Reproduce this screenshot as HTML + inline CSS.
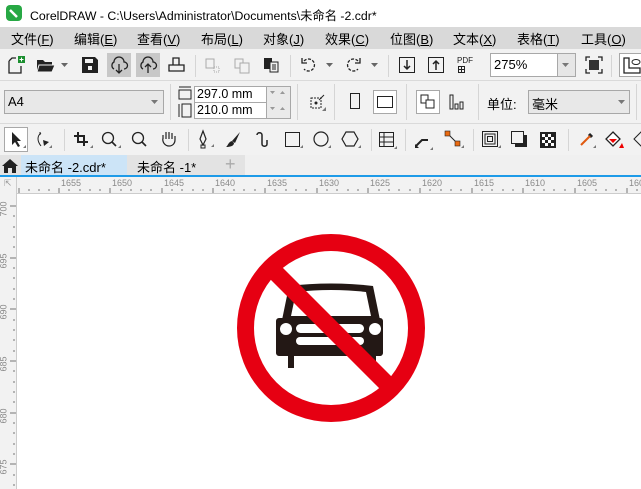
<!DOCTYPE html>
<html><head><meta charset="utf-8"><style>
*{margin:0;padding:0;box-sizing:border-box}
body{width:641px;height:489px;overflow:hidden;background:#fff;font-family:"Liberation Sans","Noto Sans CJK SC",sans-serif;position:relative;font-size:12px;color:#000}
.a{position:absolute}
.t{position:absolute;white-space:nowrap}
svg{position:absolute;overflow:visible}
.sep{position:absolute;width:1px;background:#d5d5d5}
.rl{position:absolute;font-size:9px;color:#8a8a8a;font-family:"Liberation Sans",sans-serif}
</style></head><body>
<!-- title -->
<div class="a" style="left:0;top:0;width:641px;height:27px;background:#fff"></div>
<div class="a" style="left:6px;top:5px;width:16px;height:16px;border-radius:4px;background:#27a844"></div>
<svg style="left:6px;top:5px" width="16" height="16"><path d="M4 5 L11 12" stroke="#fff" stroke-width="2.5"/></svg>
<div class="t" style="left:30px;top:6px;font-size:12.3px">CorelDRAW - C:\Users\Administrator\Documents\未命名 -2.cdr*</div>
<!-- menu -->
<div class="a" style="left:0;top:27px;width:641px;height:22px;background:#d9d9d9"></div>
<div class="t" style="left:11px;top:29px;font-size:13px">文件(<u>F</u>)</div>
<div class="t" style="left:74px;top:29px;font-size:13px">编辑(<u>E</u>)</div>
<div class="t" style="left:137px;top:29px;font-size:13px">查看(<u>V</u>)</div>
<div class="t" style="left:201px;top:29px;font-size:13px">布局(<u>L</u>)</div>
<div class="t" style="left:263px;top:29px;font-size:13px">对象(<u>J</u>)</div>
<div class="t" style="left:325px;top:29px;font-size:13px">效果(<u>C</u>)</div>
<div class="t" style="left:390px;top:29px;font-size:13px">位图(<u>B</u>)</div>
<div class="t" style="left:453px;top:29px;font-size:13px">文本(<u>X</u>)</div>
<div class="t" style="left:517px;top:29px;font-size:13px">表格(<u>T</u>)</div>
<div class="t" style="left:581px;top:29px;font-size:13px">工具(<u>O</u>)</div>
<!-- toolbars bg -->
<div class="a" style="left:0;top:49px;width:641px;height:106px;background:#f2f2f2"></div>
<div class="a" style="left:0;top:80px;width:641px;height:1px;background:#dadada"></div>
<div class="a" style="left:0;top:123px;width:641px;height:1px;background:#dadada"></div>
<!-- row1 icons -->
<svg style="left:7px;top:56px" width="20" height="20"><path d="M2 5 L5 2 L9 2 M2 5 V17 H14 V10" fill="none" stroke="#222" stroke-width="1.3"/><rect x="11" y="0" width="7" height="7" fill="#1b8f2f"/><path d="M14.5 1.5v4M12.5 3.5h4" stroke="#fff"/></svg>
<svg style="left:37px;top:58px" width="20" height="16"><path d="M0 2 H6 L8 4 H15 V14 H0Z" fill="#222"/><path d="M2 7 H18 L15 14 H0Z" fill="#222" stroke="#f2f2f2"/></svg>
<svg style="left:61px;top:63px" width="8" height="5"><path d="M0 0H7L3.5 4Z" fill="#666"/></svg>
<svg style="left:82px;top:57px" width="16" height="16"><path d="M0 0H13L16 3V16H0Z" fill="#222"/><rect x="3" y="2" width="8" height="4" fill="#f2f2f2"/><rect x="6" y="9" width="4" height="4" fill="#f2f2f2"/></svg>
<div class="a" style="left:107px;top:53px;width:24px;height:24px;background:#c8c8c8"></div>
<div class="a" style="left:136px;top:53px;width:24px;height:24px;background:#c8c8c8"></div>
<svg style="left:110px;top:56px" width="18" height="18"><path d="M4 13 A4 4 0 0 1 4 6 A5 5 0 0 1 14 6 A3.5 3.5 0 0 1 14 13" fill="none" stroke="#222" stroke-width="1.3"/><path d="M9 8V17M6 14L9 17L12 14" fill="none" stroke="#222" stroke-width="1.3"/></svg>
<svg style="left:139px;top:56px" width="18" height="18"><path d="M4 13 A4 4 0 0 1 4 6 A5 5 0 0 1 14 6 A3.5 3.5 0 0 1 14 13" fill="none" stroke="#222" stroke-width="1.3"/><path d="M9 17V8M6 11L9 8L12 11" fill="none" stroke="#222" stroke-width="1.3"/></svg>
<svg style="left:168px;top:57px" width="18" height="16"><path d="M5 8V1H11V8M1 8H16V14H1Z" fill="none" stroke="#222" stroke-width="1.3"/></svg>
<div class="sep" style="left:195px;top:55px;height:22px"></div>
<svg style="left:205px;top:58px" width="16" height="16"><rect x="1" y="1" width="8" height="9" fill="none" stroke="#aaa"/><rect x="9" y="9" width="5" height="5" fill="none" stroke="#aaa" stroke-dasharray="1 1"/></svg>
<svg style="left:234px;top:58px" width="16" height="16"><rect x="1" y="1" width="8" height="9" fill="none" stroke="#aaa"/><rect x="6" y="5" width="9" height="10" fill="#f2f2f2" stroke="#aaa"/></svg>
<svg style="left:263px;top:57px" width="16" height="16"><rect x="1" y="1" width="8" height="11" fill="#222"/><rect x="7" y="5" width="8" height="10" fill="#f2f2f2" stroke="#222"/><path d="M9 8h4M9 10h4M9 12h4" stroke="#222"/></svg>
<div class="sep" style="left:290px;top:55px;height:22px"></div>
<svg style="left:301px;top:57px" width="16" height="16"><path d="M3 4 A6 6 0 1 1 3 12" fill="none" stroke="#222" stroke-width="1.3" stroke-dasharray="3 1.5"/><path d="M1 1V6H6" fill="none" stroke="#222" stroke-width="1.3"/></svg>
<svg style="left:326px;top:63px" width="8" height="5"><path d="M0 0H7L3.5 4Z" fill="#666"/></svg>
<svg style="left:345px;top:57px" width="16" height="16"><path d="M13 4 A6 6 0 1 0 13 12" fill="none" stroke="#222" stroke-width="1.3" stroke-dasharray="3 1.5"/><path d="M15 1V6H10" fill="none" stroke="#222" stroke-width="1.3"/></svg>
<svg style="left:371px;top:63px" width="8" height="5"><path d="M0 0H7L3.5 4Z" fill="#666"/></svg>
<div class="sep" style="left:388px;top:55px;height:22px"></div>
<svg style="left:399px;top:57px" width="16" height="16"><rect x="0.5" y="0.5" width="15" height="15" fill="none" stroke="#222"/><path d="M8 3V12M5 9L8 12L11 9" fill="none" stroke="#222" stroke-width="1.5"/></svg>
<svg style="left:428px;top:57px" width="16" height="16"><rect x="0.5" y="0.5" width="15" height="15" fill="none" stroke="#222"/><path d="M8 13V4M5 7L8 4L11 7" fill="none" stroke="#222" stroke-width="1.5"/></svg>
<div class="t" style="left:457px;top:56px;font-size:8px;color:#222">PDF</div>
<svg style="left:458px;top:66px" width="8" height="8"><rect x="0.5" y="0.5" width="6" height="6" fill="none" stroke="#222"/><path d="M3.5 1v5M1 3.5h5" stroke="#222"/></svg>
<div class="a" style="left:490px;top:53px;width:86px;height:24px;border:1px solid #a8a8a8;background:#fff"></div>
<div class="a" style="left:557px;top:54px;width:18px;height:22px;background:#e6e6e6;border-left:1px solid #a8a8a8"></div>
<svg style="left:562px;top:63px" width="8" height="5"><path d="M0 0H7L3.5 4Z" fill="#777"/></svg>
<div class="t" style="left:494px;top:57px;font-size:13px">275%</div>
<svg style="left:585px;top:56px" width="18" height="18"><path d="M1 5V1H5M13 1H17V5M17 13V17H13M5 17H1V13" fill="none" stroke="#222" stroke-width="1.3"/><rect x="4" y="4" width="10" height="10" fill="#333"/></svg>
<div class="sep" style="left:611px;top:55px;height:22px"></div>
<div class="a" style="left:619px;top:53px;width:30px;height:24px;border:1px solid #a8a8a8;background:#fff"></div>
<svg style="left:623px;top:57px" width="18" height="18"><path d="M1 1V16H17V11H6V1Z" fill="none" stroke="#222" stroke-width="1.3"/><ellipse cx="13" cy="5" rx="4" ry="2.5" fill="none" stroke="#222"/></svg>
<!-- row2 -->
<div class="a" style="left:4px;top:90px;width:160px;height:24px;border:1px solid #a8a8a8;background:#e8e8e8"></div>
<div class="t" style="left:8px;top:94px;font-size:13px">A4</div>
<svg style="left:151px;top:100px" width="8" height="5"><path d="M0 0H7L3.5 4Z" fill="#777"/></svg>
<div class="sep" style="left:170px;top:84px;height:36px"></div>
<svg style="left:178px;top:86px" width="14" height="32"><path d="M1 1H13M1 4H13V13H1Z" fill="none" stroke="#222"/><path d="M1 18V31M4 18V31H13V18Z" fill="none" stroke="#222"/></svg>
<div class="a" style="left:194px;top:86px;width:97px;height:33px;border:1px solid #a8a8a8;background:#fff"></div>
<div class="a" style="left:194px;top:102px;width:72px;height:1px;background:#a8a8a8"></div>
<div class="a" style="left:266px;top:87px;width:24px;height:31px;background:#eaeaea;border-left:1px solid #a8a8a8"></div>
<div class="t" style="left:197px;top:87px;font-size:12.5px">297.0 mm</div>
<div class="t" style="left:197px;top:103px;font-size:12.5px">210.0 mm</div>
<svg style="left:270px;top:91px" width="18" height="22"><path d="M0 0H5L2.5 3Z M10 3H15L12.5 0Z M0 16H5L2.5 19Z M10 19H15L12.5 16Z" fill="#999"/></svg>
<div class="sep" style="left:297px;top:84px;height:36px"></div>
<svg style="left:308px;top:94px" width="18" height="18"><rect x="3" y="4" width="10" height="10" fill="none" stroke="#222" stroke-dasharray="2 1"/><circle cx="8" cy="9" r="1.5" fill="#222"/><path d="M11 6L16 1" stroke="#222"/><path d="M14 17H18V13Z" fill="#777"/></svg>
<div class="sep" style="left:334px;top:84px;height:36px"></div>
<div class="a" style="left:350px;top:93px;width:10px;height:16px;border:1px solid #222"></div>
<div class="a" style="left:373px;top:90px;width:24px;height:24px;border:1px solid #a8a8a8;background:#fff"></div>
<div class="a" style="left:377px;top:96px;width:16px;height:12px;border:1px solid #222"></div>
<div class="sep" style="left:406px;top:84px;height:36px"></div>
<div class="a" style="left:416px;top:90px;width:24px;height:24px;border:1px solid #a8a8a8;background:#fff"></div>
<svg style="left:420px;top:94px" width="16" height="16"><rect x="1" y="1" width="7" height="8" fill="none" stroke="#222"/><rect x="6" y="6" width="8" height="8" fill="#fff" stroke="#222"/></svg>
<svg style="left:449px;top:94px" width="16" height="16"><rect x="1" y="1" width="3" height="14" fill="none" stroke="#222"/><rect x="6" y="10" width="3" height="5" fill="none" stroke="#222"/><rect x="11" y="8" width="3" height="7" fill="none" stroke="#222"/></svg>
<div class="sep" style="left:478px;top:84px;height:36px"></div>
<div class="t" style="left:487px;top:94px;font-size:13px">单位:</div>
<div class="a" style="left:528px;top:90px;width:102px;height:24px;border:1px solid #a8a8a8;background:#e8e8e8"></div>
<div class="t" style="left:532px;top:94px;font-size:13px">毫米</div>
<svg style="left:618px;top:100px" width="8" height="5"><path d="M0 0H7L3.5 4Z" fill="#777"/></svg>
<div class="sep" style="left:636px;top:84px;height:36px"></div>
<!-- row3 toolbox -->
<div class="a" style="left:4px;top:127px;width:24px;height:25px;border:1px solid #a8a8a8;background:#fff"></div>
<svg style="left:10px;top:131px" width="16" height="18"><path d="M2 1V14L5 11L8 16L10 15L7 10H11Z" fill="#222"/><path d="M13 17H16V14Z" fill="#777"/></svg>
<svg style="left:34px;top:131px" width="20" height="18"><path d="M7 2C3 5 3 10 7 15" fill="none" stroke="#222"/><path d="M6 1v3" stroke="#222"/><path d="M9 9L15 11L10 15Z" fill="#222"/><path d="M15 17H18V14Z" fill="#777"/></svg>
<div class="sep" style="left:64px;top:129px;height:22px"></div>
<svg style="left:73px;top:131px" width="20" height="18"><path d="M5 1V11H15M1 5H11V15" fill="none" stroke="#222" stroke-width="2"/><path d="M17 17H20V14Z" fill="#777"/></svg>
<svg style="left:101px;top:131px" width="20" height="18"><circle cx="7" cy="7" r="5.5" fill="none" stroke="#222" stroke-width="1.3"/><path d="M11 11L15 15" stroke="#222" stroke-width="1.6"/><path d="M17 17H20V14Z" fill="#777"/></svg>
<svg style="left:131px;top:131px" width="18" height="18"><circle cx="7" cy="7" r="5.5" fill="none" stroke="#222" stroke-width="1.3"/><path d="M11 11L15 15" stroke="#222" stroke-width="1.6"/></svg>
<svg style="left:160px;top:130px" width="18" height="18"><path d="M3 9V5M6 9V2M9 9V2M12 9V3M15 10V6M3 8C2 12 5 16 9 16S15 13 15 10" fill="none" stroke="#222" stroke-width="1.2"/></svg>
<div class="sep" style="left:188px;top:129px;height:22px"></div>
<svg style="left:197px;top:130px" width="20" height="20"><path d="M6 1L3 9L6 15L9 9Z" fill="none" stroke="#222" stroke-width="1.2"/><path d="M4 15H8V18H4Z" fill="none" stroke="#222"/><path d="M14 17H17V14Z" fill="#777"/></svg>
<svg style="left:225px;top:131px" width="20" height="18"><path d="M15 1L7 10L10 12Z" fill="#222"/><path d="M7 10C3 11 3 15 1 16C5 16 9 15 9 12Z" fill="#222"/></svg>
<svg style="left:254px;top:131px" width="20" height="18"><path d="M3 4C3 1 8 1 8 4V13C8 16 13 16 13 13V9" fill="none" stroke="#222" stroke-width="1.5"/></svg>
<div class="a" style="left:285px;top:132px;width:15px;height:15px;border:1px solid #222"></div>
<svg style="left:300px;top:145px" width="4" height="4"><path d="M0 3H3V0Z" fill="#777"/></svg>
<svg style="left:313px;top:131px" width="20" height="18"><circle cx="8" cy="8" r="7" fill="none" stroke="#222" stroke-width="1.2"/><path d="M15 17H18V14Z" fill="#777"/></svg>
<svg style="left:342px;top:131px" width="20" height="18"><path d="M4 1H12L16 8L12 15H4L0 8Z" fill="none" stroke="#222" stroke-width="1.2"/><path d="M16 17H19V14Z" fill="#777"/></svg>
<div class="sep" style="left:371px;top:129px;height:22px"></div>
<svg style="left:379px;top:132px" width="20" height="18"><rect x="0.5" y="0.5" width="14" height="14" fill="none" stroke="#222"/><path d="M0 5H15M0 10H15M5 0V15" stroke="#222"/><path d="M15 17H18V14Z" fill="#777"/></svg>
<div class="sep" style="left:405px;top:129px;height:22px"></div>
<svg style="left:414px;top:133px" width="20" height="18"><path d="M2 13L8 7H14" fill="none" stroke="#222" stroke-width="2"/><path d="M1 11V15H5" fill="#222"/><path d="M16 17H19V14Z" fill="#777"/></svg>
<svg style="left:445px;top:131px" width="20" height="18"><path d="M3 3L13 13" stroke="#222"/><rect x="0" y="0" width="5" height="5" fill="#ea6a10" stroke="#222" stroke-width="0.6"/><rect x="10" y="10" width="5" height="5" fill="#ea6a10" stroke="#222" stroke-width="0.6"/><path d="M16 17H19V14Z" fill="#777"/></svg>
<div class="sep" style="left:473px;top:129px;height:22px"></div>
<svg style="left:482px;top:131px" width="20" height="18"><rect x="0.5" y="0.5" width="15" height="15" fill="none" stroke="#222"/><rect x="3" y="3" width="10" height="10" fill="none" stroke="#222"/><rect x="5.5" y="5.5" width="5" height="5" fill="none" stroke="#222"/><path d="M16 17H19V14Z" fill="#777"/></svg>
<svg style="left:511px;top:131px" width="20" height="18"><rect x="4" y="4" width="12" height="12" fill="#222"/><rect x="0.5" y="0.5" width="12" height="12" fill="#f2f2f2" stroke="#222"/></svg>
<svg style="left:540px;top:132px" width="16" height="16"><rect width="16" height="16" fill="#222"/><path d="M2 2h3v3H2zM8 2h3v3H8zM5 5h3v3H5zM11 5h3v3h-3zM2 8h3v3H2zM8 8h3v3H8zM5 11h3v3H5zM11 11h3v3h-3z" fill="#fff"/></svg>
<div class="sep" style="left:568px;top:129px;height:22px"></div>
<svg style="left:578px;top:131px" width="20" height="18"><path d="M11 3L14 6" stroke="#222" stroke-width="3"/><path d="M12 5L3 14" stroke="#e05a10" stroke-width="2"/><path d="M15 17H18V14Z" fill="#777"/></svg>
<svg style="left:606px;top:131px" width="22" height="18"><path d="M7 1L14 8L7 15L0 8Z" fill="#fff" stroke="#222" stroke-width="1.3"/><path d="M3 8H11L7 12Z" fill="#e00"/><path d="M13 17H18L16 12Z" fill="#e00"/></svg>
<svg style="left:634px;top:131px" width="10" height="18"><path d="M7 1L14 8L7 15L0 8Z" fill="none" stroke="#222"/></svg>
<!-- tabs -->
<div class="a" style="left:0;top:155px;width:641px;height:21px;background:#f0f0f0"></div>
<div class="a" style="left:0;top:155px;width:245px;height:21px;background:#e3e3e3"></div>
<svg style="left:2px;top:158px" width="16" height="16"><path d="M8 1L16 8H14V15H10V10H6V15H2V8H0Z" fill="#222"/></svg>
<div class="a" style="left:21px;top:155px;width:106px;height:21px;background:#cce4f7"></div>
<div class="t" style="left:25px;top:157px;font-size:13px">未命名 -2.cdr*</div>
<div class="t" style="left:137px;top:157px;font-size:13px">未命名 -1*</div>
<div class="t" style="left:225px;top:154px;font-size:18px;color:#aaa">+</div>
<div class="a" style="left:0;top:175px;width:641px;height:2px;background:#1e9be8"></div>
<!-- rulers -->
<div class="a" style="left:0;top:177px;width:641px;height:17px;background:#f2f2f2;border-bottom:1px solid #ccc"></div>
<div class="a" style="left:0;top:177px;width:17px;height:312px;background:#f2f2f2;border-right:1px solid #ccc"></div>
<div class="t" style="left:4px;top:178px;font-size:9px;color:#999">⇱</div>
<svg style="left:0;top:0" width="641" height="489">
<g stroke="#777" stroke-width="1">
<path d="M19 188v5M29 189v2M39 189v2M49 189v2M59 188v5M69 189v2M80 189v2M90 189v2M100 189v2M110 188v5M121 189v2M131 189v2M141 189v2M151 189v2M162 188v5M172 189v2M182 189v2M193 189v2M203 189v2M213 188v5M224 189v2M234 189v2M244 189v2M255 189v2M265 188v5M275 189v2M286 189v2M296 189v2M306 189v2M317 188v5M327 189v2M337 189v2M348 189v2M358 189v2M368 188v5M379 189v2M389 189v2M399 189v2M410 189v2M420 188v5M430 189v2M441 189v2M451 189v2M461 189v2M472 188v5M482 189v2M492 189v2M503 189v2M513 189v2M523 188v5M534 189v2M544 189v2M554 189v2M565 189v2M575 188v5M585 189v2M596 189v2M606 189v2M616 189v2M627 188v5M637 189v2"/>
<path d="M10 206h6M13 216h2M13 227h2M13 237h2M13 247h2M10 258h6M13 268h2M13 278h2M13 289h2M13 299h2M10 309h6M13 320h2M13 330h2M13 340h2M13 351h2M10 361h6M13 371h2M13 382h2M13 392h2M13 402h2M10 413h6M13 423h2M13 433h2M13 444h2M13 454h2M10 464h6M13 475h2M13 485h2"/>
</g>
</svg>
<div class="rl" style="left:61px;top:178px">1655</div>
<div class="rl" style="left:112px;top:178px">1650</div>
<div class="rl" style="left:164px;top:178px">1645</div>
<div class="rl" style="left:215px;top:178px">1640</div>
<div class="rl" style="left:267px;top:178px">1635</div>
<div class="rl" style="left:319px;top:178px">1630</div>
<div class="rl" style="left:370px;top:178px">1625</div>
<div class="rl" style="left:422px;top:178px">1620</div>
<div class="rl" style="left:474px;top:178px">1615</div>
<div class="rl" style="left:525px;top:178px">1610</div>
<div class="rl" style="left:577px;top:178px">1605</div>
<div class="rl" style="left:629px;top:178px">1600</div>
<div class="rl" style="left:-4px;top:204px;transform:rotate(-90deg)">700</div>
<div class="rl" style="left:-4px;top:256px;transform:rotate(-90deg)">695</div>
<div class="rl" style="left:-4px;top:307px;transform:rotate(-90deg)">690</div>
<div class="rl" style="left:-4px;top:359px;transform:rotate(-90deg)">685</div>
<div class="rl" style="left:-4px;top:411px;transform:rotate(-90deg)">680</div>
<div class="rl" style="left:-4px;top:462px;transform:rotate(-90deg)">675</div>
<!-- sign -->
<svg style="left:0;top:0" width="641" height="489">
<circle cx="331" cy="328" r="85.5" fill="#fff" stroke="#e60012" stroke-width="17"/>
<g fill="#231815">
<path d="M289 286 Q331 281 373 286 L380 320 H282Z"/>
<rect x="276" y="318" width="107" height="38" rx="3"/>
<rect x="288" y="354" width="6" height="14"/>
<rect x="370" y="354" width="6" height="14"/>
</g>
<path d="M296 292 Q331 288 366 292 L371 316 H291Z" fill="#fff"/>
<circle cx="286" cy="329" r="6" fill="#fff"/>
<circle cx="375" cy="329" r="6" fill="#fff"/>
<rect x="296" y="324" width="68" height="9" rx="4.5" fill="#fff"/>
<rect x="296" y="337" width="68" height="8" rx="4" fill="#fff"/>
<path d="M270 267 L393 390" stroke="#e60012" stroke-width="17"/>
</svg>
</body></html>
